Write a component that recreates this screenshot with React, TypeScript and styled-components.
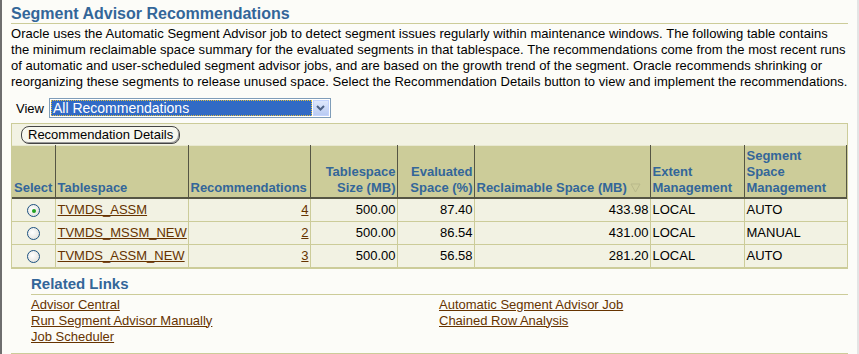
import React from "react";
import styled, { createGlobalStyle } from "styled-components";

const Global = createGlobalStyle`
  html, body { margin: 0; padding: 0; background: #fcfcf8; }
  body { font-family: "Liberation Sans", Arial, sans-serif; font-size: 13px; color: #000; }
`;

const Frame = styled.div`
  width: 859px;
  height: 354px;
  box-sizing: border-box;
  border-left: 2px solid #6e6e6e;
  border-right: 2px solid #e4e4e4;
  padding: 4px 9px 0 9px;
  overflow: hidden;
`;

const Title = styled.h1`
  margin: 0;
  font-size: 16px;
  font-weight: bold;
  color: #336699;
  line-height: 19px;
  padding-bottom: 0;
  border-bottom: 1px solid #cccc99;
`;

const Para = styled.p`
  margin: 2px 0 0 0;
  line-height: 16px;
  font-size: 13px;
  letter-spacing: 0.04px;
`;

const ViewRow = styled.div`
  display: flex;
  align-items: center;
  gap: 5px;
  margin: 8px 0 0 5px;
  height: 20px;
`;

const Label = styled.span`
  font-size: 13px;
`;

const Select = styled.div`
  width: 282px;
  height: 20px;
  box-sizing: border-box;
  border: 1px solid #7f9db9;
  background: #fff;
  display: flex;
  padding: 1px;
`;

const SelectValue = styled.div`
  flex: 1;
  background: #316ac5;
  color: #fff;
  font-size: 14px;
  line-height: 16px;
  padding-left: 2px;
  outline: 1px dotted #e0c040;
  outline-offset: -1px;
`;

const SelectArrow = styled.div`
  width: 16px;
  margin-left: 1px;
  background: linear-gradient(#dfe8fc, #b9cbf3);
  border: 1px solid #c3d3fd;
  box-sizing: border-box;
  display: flex;
  align-items: center;
  justify-content: center;
`;

const TableBox = styled.div`
  margin-top: 5px;
  border: 1px solid #cccc99;
  background: #f2f2e3;
`;

const Toolbar = styled.div`
  height: 21px;
  display: flex;
  align-items: center;
  padding-left: 9px;
`;

const Button = styled.button`
  font-family: "Liberation Sans", Arial, sans-serif;
  font-size: 13px;
  height: 18px;
  width: 159px;
  padding: 0 6px;
  border: 1px solid #444;
  border-radius: 8px;
  background: #f7f7ee;
  box-shadow: inset -1px -1px 0 #999;
  color: #000;
  line-height: 14px;
  white-space: nowrap;
`;

const Table = styled.table`
  border-collapse: collapse;
  width: 100%;
  table-layout: fixed;
`;

const Th = styled.th<{ $align?: string; $w?: number }>`
  background: #cccc99;
  color: #336699;
  font-weight: bold;
  font-size: 13px;
  line-height: 16px;
  text-align: ${(p) => p.$align || "left"};
  vertical-align: bottom;
  padding: 2px 1px 1px 2px;
  border-top: 1px solid #e8e8d0;
  border-bottom: 2px solid #555544;
  border-left: 1px solid #f0f0e0;
  border-right: 1px solid #555544;
  width: ${(p) => (p.$w ? p.$w + "px" : "auto")};
  white-space: nowrap;
  overflow: hidden;
  height: 51px;
  box-sizing: border-box;
  &:first-child { border-left: none; }
`;

const Td = styled.td<{ $align?: string }>`
  border: 1px solid #cccc99;
  padding: 0 1px 0 2px;
  height: 23px;
  box-sizing: border-box;
  font-size: 13px;
  text-align: ${(p) => p.$align || "left"};
  white-space: nowrap;
  &:first-child { border-left: none; }
  &:last-child { border-right: none; }
`;

const Link = styled.a`
  color: #663300;
  text-decoration: underline;
  cursor: pointer;
`;

const Radio = styled.span<{ $on?: boolean }>`
  display: inline-block;
  width: 11px;
  height: 11px;
  border-radius: 50%;
  border: 1px solid #1c5180;
  background: radial-gradient(circle at 40% 40%, #fff, #dcdcd6);
  position: relative;
  vertical-align: middle;
  &::after {
    content: "";
    display: ${(p) => (p.$on ? "block" : "none")};
    position: absolute;
    left: 3.5px;
    top: 3.5px;
    width: 4px;
    height: 4px;
    border-radius: 50%;
    background: #21a121;
  }
`;

const SortMark = styled.svg`
  margin-left: 3px;
  vertical-align: -1px;
`;

const Related = styled.section`
  margin: 6px 0 0 20px;
`;

const RelatedTitle = styled.h2`
  margin: 0;
  font-size: 15px;
  color: #336699;
  line-height: 18px;
  border-bottom: 1px solid #cccc99;
  padding-bottom: 1px;
`;

const LinkGrid = styled.div`
  display: grid;
  grid-template-columns: 408px 1fr;
  line-height: 16px;
  margin-top: 2px;
`;

const LinkCol = styled.div`
  display: flex;
  flex-direction: column;
  align-items: flex-start;
`;

const BottomRule = styled.div`
  border-top: 1px solid #cccc99;
  margin-top: 8px;
`;

const rows = [
  { sel: true, ts: "TVMDS_ASSM", rec: "4", size: "500.00", ev: "87.40", rs: "433.98", ext: "LOCAL", ssm: "AUTO" },
  { sel: false, ts: "TVMDS_MSSM_NEW", rec: "2", size: "500.00", ev: "86.54", rs: "431.00", ext: "LOCAL", ssm: "MANUAL" },
  { sel: false, ts: "TVMDS_ASSM_NEW", rec: "3", size: "500.00", ev: "56.58", rs: "281.20", ext: "LOCAL", ssm: "AUTO" },
];

export default function App() {
  return (
    <>
      <Global />
      <Frame>
        <Title>Segment Advisor Recommendations</Title>
        <Para>
          Oracle uses the Automatic Segment Advisor job to detect segment issues regularly within maintenance windows. The following table contains<br />
          the minimum reclaimable space summary for the evaluated segments in that tablespace. The recommendations come from the most recent runs<br />
          of automatic and user-scheduled segment advisor jobs, and are based on the growth trend of the segment. Oracle recommends shrinking or<br />
          reorganizing these segments to release unused space. Select the Recommendation Details button to view and implement the recommendations.
        </Para>
        <ViewRow>
          <Label>View</Label>
          <Select>
            <SelectValue>All Recommendations</SelectValue>
            <SelectArrow>
              <svg width="9" height="6" viewBox="0 0 9 6">
                <path d="M1 1 L4.5 4.5 L8 1" stroke="#4d6185" strokeWidth="2" fill="none" />
              </svg>
            </SelectArrow>
          </Select>
        </ViewRow>
        <TableBox>
          <Toolbar>
            <Button>Recommendation Details</Button>
          </Toolbar>
          <Table>
            <thead>
              <tr>
                <Th $w={43}>Select</Th>
                <Th $w={133}>Tablespace</Th>
                <Th $w={122}>Recommendations</Th>
                <Th $w={87} $align="right">Tablespace<br />Size (MB)</Th>
                <Th $w={77} $align="right">Evaluated<br />Space (%)</Th>
                <Th $w={176}>
                  Reclaimable Space (MB)
                  <SortMark width="11" height="10" viewBox="0 0 11 10">
                    <path d="M1 1 H10 L5.5 9 Z" fill="none" stroke="#b9b98a" strokeWidth="1" />
                  </SortMark>
                </Th>
                <Th $w={94}>Extent<br />Management</Th>
                <Th>Segment<br />Space<br />Management</Th>
              </tr>
            </thead>
            <tbody>
              {rows.map((r) => (
                <tr key={r.ts}>
                  <Td $align="center"><Radio $on={r.sel} /></Td>
                  <Td><Link>{r.ts}</Link></Td>
                  <Td $align="right"><Link>{r.rec}</Link></Td>
                  <Td $align="right">{r.size}</Td>
                  <Td $align="right">{r.ev}</Td>
                  <Td $align="right">{r.rs}</Td>
                  <Td>{r.ext}</Td>
                  <Td>{r.ssm}</Td>
                </tr>
              ))}
            </tbody>
          </Table>
        </TableBox>
        <Related>
          <RelatedTitle>Related Links</RelatedTitle>
          <LinkGrid>
            <LinkCol>
              <Link>Advisor Central</Link>
              <Link>Run Segment Advisor Manually</Link>
              <Link>Job Scheduler</Link>
            </LinkCol>
            <LinkCol>
              <Link>Automatic Segment Advisor Job</Link>
              <Link>Chained Row Analysis</Link>
            </LinkCol>
          </LinkGrid>
        </Related>
        <BottomRule />
      </Frame>
    </>
  );
}
